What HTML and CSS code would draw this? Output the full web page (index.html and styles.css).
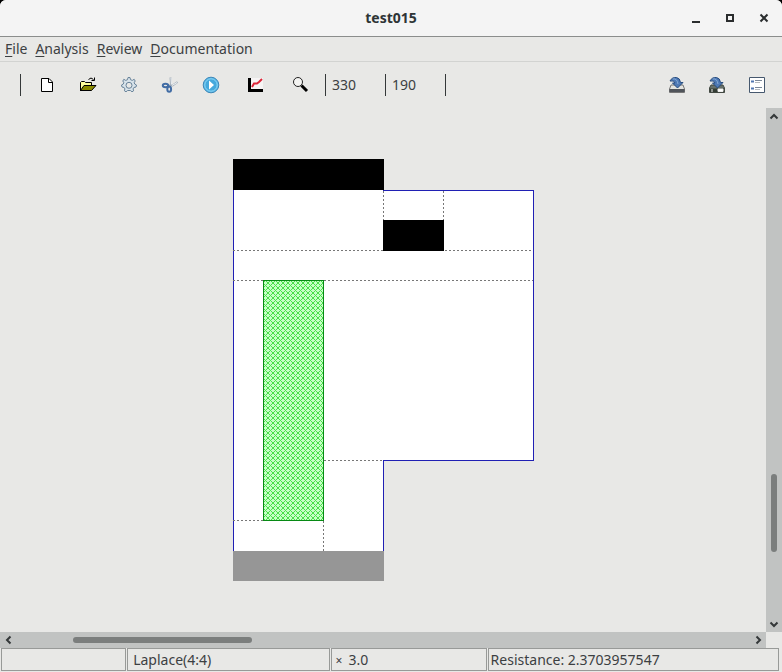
FILE: index.html
```html
<!DOCTYPE html>
<html lang="en">
<head>
<meta charset="utf-8">
<title>test015</title>
<link rel="stylesheet" href="styles.css">
</head>
<body>
<div class="window">
  <header class="titlebar">
    <span></span>
    <h1 class="title">test015</h1>
    <div class="controls">
      <button class="control" aria-label="Minimize"><svg width="10" height="10" viewBox="0 0 10 10"><path d="M1 9H9" stroke="#2a2d2e" stroke-width="2"/></svg></button>
      <button class="control" aria-label="Maximize"><svg width="10" height="10" viewBox="0 0 10 10"><path d="M2 2H8V8H2Z" fill="none" stroke="#2a2d2e" stroke-width="2"/></svg></button>
      <button class="control" aria-label="Close"><svg width="10" height="10" viewBox="0 0 10 10"><path d="M1.5 1.5L8.5 8.5M8.5 1.5L1.5 8.5" stroke="#2a2d2e" stroke-width="2"/></svg></button>
    </div>
  </header>
  <nav class="menubar">
    <button class="menu"><u>F</u>ile</button>
    <button class="menu"><u>A</u>nalysis</button>
    <button class="menu"><u>R</u>eview</button>
    <button class="menu"><u>D</u>ocumentation</button>
  </nav>
  <div class="toolbar">
    <div class="tools tools-start">
      <div class="group">
        <button class="tool" aria-label="New"><svg width="18" height="18" viewBox="0 0 18 18"><path d="M3.5 2.5H11L14.5 6V15.5H3.5Z" fill="#fff" stroke="#000"/><path d="M10.5 2.5V6.5H14.5" fill="none" stroke="#000"/></svg></button>
        <button class="tool" aria-label="Open"><svg width="18" height="18" viewBox="0 0 18 18"><path d="M1.5 15V6.500L2.500 5.500H5.500L6.500 6.500H12.500V9.500" fill="#ffff9c" stroke="#000"/><path d="M1.500 14.500L5 9.500H17L12.500 14.500Z" fill="#8a8a00" stroke="#000"/><path d="M9.500 3.500Q12 .5 14.500 3.500M15.500 1.500V4.500H12.500" fill="none" stroke="#000"/></svg></button>
        <button class="tool" aria-label="Settings"><svg width="18" height="18" viewBox="0 0 18 18"><path d="M8 1.500H10L10.500 3.700L12.300 4.400L14.200 3.300L15.200 5L14.200 6.700L14.700 8L16.500 9L16 11L13.900 11.500L13.100 12.900L13.600 14.800L12 15.800L10.400 14.500H7.600L6 15.800L4.400 14.800L4.900 12.900L4.100 11.500L2 11L1.500 9L3.300 8L3.800 6.700L2.800 5L3.800 3.300L5.700 4.400L7.500 3.700Z" fill="#d8e3ea" stroke="#68839a"/><circle cx="9" cy="9.300" r="3" fill="#e8e8e6" stroke="#68839a"/></svg></button>
        <button class="tool" aria-label="Cut"><svg width="18" height="18" viewBox="0 0 18 18"><path d="M9.500 1.500L10 9L8 11M16.500 6L11.500 9.500L6 9.500" fill="none" stroke="#a7b1bb" stroke-width="2"/><path d="M10 2L10.500 8.500M16 6.500L11 9.500" stroke="#edf1f4"/><ellipse cx="4.500" cy="9.500" rx="2.700" ry="1.800" fill="none" stroke="#426da5" stroke-width="2"/><ellipse cx="8.200" cy="13.200" rx="1.900" ry="2.600" fill="none" stroke="#426da5" stroke-width="2"/></svg></button>
        <button class="tool" aria-label="Run"><svg width="18" height="18" viewBox="0 0 18 18"><circle cx="9" cy="9" r="7.800" fill="#54b5e6" stroke="#3e87b7"/><circle cx="9" cy="9" r="6.200" fill="#45a9dd" stroke="#8cd6f5"/><path d="M7 4.500L12 9L7 13.500Z" fill="#fff"/></svg></button>
      </div>
      <div class="group group-view">
        <button class="tool" aria-label="Plot"><svg width="18" height="18" viewBox="0 0 18 18"><path d="M4 2H16V13H4Z" fill="#f7f5f5"/><path d="M2.500 2V14.500H16" fill="none" stroke="#000" stroke-width="3"/><path d="M5 11L7 7.500H10L12 6L15 3" fill="none" stroke="#dc2638" stroke-width="2"/></svg></button>
        <button class="tool" aria-label="Zoom"><svg width="18" height="18" viewBox="0 0 18 18"><circle cx="7" cy="6" r="4.500" fill="#f4f4f2" stroke="#222"/><path d="M10.500 9.500L16 15" stroke="#000" stroke-width="3"/></svg></button>
      </div>
    </div>
    <output class="readout">330</output>
    <output class="readout readout-last">190</output>
    <div class="tools tools-end">
      <button class="tool" aria-label="Save"><svg width="18" height="18" viewBox="0 0 18 18"><path d="M3 9H15L16.500 13V16.500H1.500V13Z" fill="#e3e3df" stroke="#777"/><path d="M1.500 14.500H16.500" stroke="#50545a" stroke-width="3"/><path d="M2 5Q4 1 8.500 1.500Q12 2 12.500 6.500H15L9.500 12L4.500 7H7Q6.500 4 2 5Z" fill="#4e79b5" stroke="#284d80"/><path d="M5 3Q9 2 10 8" fill="none" stroke="#86aad6"/></svg></button>
      <button class="tool" aria-label="Save as"><svg width="18" height="18" viewBox="0 0 18 18"><path d="M3 9H15L16.500 12V16.500H1.500V12Z" fill="#66706b" stroke="#424942"/><path d="M2 12.500H16V16H2Z" fill="#343d35"/><path d="M4 13V16M10 13H15V15.500H10Z" stroke="#eee" fill="#fff"/><path d="M2 5Q4 1 8.500 1.500Q12 2 12.500 6.500H15L9.500 12L4.500 7H7Q6.500 4 2 5Z" fill="#4e79b5" stroke="#284d80"/><path d="M5 3Q9 2 10 8" fill="none" stroke="#86aad6"/></svg></button>
      <button class="tool" aria-label="Properties"><svg width="18" height="18" viewBox="0 0 18 18"><path d="M1.500 1.500H16.500V16.500H1.500Z" fill="#fff" stroke="#46586e"/><path d="M3 5.500H6M3 12.500H6" stroke="#5277b0" stroke-width="2"/><path d="M7 4.500H14M7 11.500H14" stroke="#7b8797"/><path d="M7 6.500H12M7 13.500H12" stroke="#b5b9bd"/></svg></button>
    </div>
  </div>
  <main class="workspace">
    <div class="canvas">
      <svg class="model" width="302" height="422" viewBox="232 159 302 422" role="img" aria-label="Model geometry" shape-rendering="crispEdges">
        <defs>
          <pattern id="hatch" width="5" height="5" patternUnits="userSpaceOnUse">
            <rect width="5" height="5" fill="#c6ffc6"/>
            <path d="M0 0h1v1H0zM1 1h1v1H1zM2 2h1v1H2zM3 3h1v1H3zM4 4h1v1H4zM4 1h1v1H4zM3 2h1v1H3zM2 3h1v1H2zM1 4h1v1H1z" fill="#48e048"/>
          </pattern>
        </defs>
        <path d="M233 190H534V461H384V551H233Z" fill="#fff"/>
        <path d="M233 190H234V551H233ZM383 190H534V461H384V551H383V460H533V191H383Z" fill="#2020b4"/>
        <rect x="263.500" y="280.500" width="60" height="240" fill="url(#hatch)" stroke="#078a14"/>
        <path d="M233 250.500H533M233 280.500H263M324 280.500H533M324 460.500H383M233 520.500H263M323.500 521V551M383.500 191V220M443.500 191V220" fill="none" stroke="#777" stroke-dasharray="2 2"/>
        <path d="M233 159H384V190H233ZM383 220H444V251H383Z"/>
        <path d="M233 551H384V581H233Z" fill="#969696"/>
      </svg>
    </div>
    <div class="scroll scroll-v">
      <svg class="arrow" width="16" height="16" viewBox="0 0 16 16"><path d="M4.500 10.500L8 7L11.500 10.500"/></svg>
      <div class="track"><span class="before"></span><span class="thumb"></span><span class="after"></span></div>
      <svg class="arrow" width="16" height="16" viewBox="0 0 16 16"><path d="M4.500 6.500L8 10L11.500 6.500"/></svg>
    </div>
    <div class="scroll scroll-h">
      <svg class="arrow" width="16" height="16" viewBox="0 0 16 16"><path d="M10.500 4.500L7 8L10.500 11.500"/></svg>
      <div class="track"><span class="before"></span><span class="thumb"></span><span class="after"></span></div>
      <svg class="arrow" width="16" height="16" viewBox="0 0 16 16"><path d="M6.500 4.500L10 8L6.500 11.500"/></svg>
    </div>
  </main>
  <footer class="statusbar">
    <div class="cell"></div>
    <div class="cell">Laplace(4:4)</div>
    <div class="cell scale"><span class="times">×</span>3.0</div>
    <div class="cell result">Resistance: 2.3703957547</div>
  </footer>
</div>
</body>
</html>
```
FILE: styles.css
```css
* { box-sizing: border-box; }

body {
  margin: 0;
  background: #000;
  color: #3c4042;
  font: 14px/20px "Noto Sans", sans-serif;
}

button {
  margin: 0;
  padding: 0;
  border: 0;
  background: none;
  color: inherit;
  font: inherit;
}

svg { display: block; }

.window {
  display: flex;
  flex-direction: column;
  min-height: 100vh;
  border-radius: 6px 6px 0 0;
  background: #e8e8e6;
  overflow: hidden;
}

.titlebar {
  display: grid;
  grid-template-columns: 1fr auto 1fr;
  align-items: center;
  height: 37px;
  border-bottom: 1px solid #8b8d8c;
  background: #f4f4f4;
}

.title {
  margin: 0;
  color: #2e3436;
  font-size: 14px;
  font-weight: 700;
}

.controls {
  display: flex;
  justify-content: flex-end;
  gap: 24px;
  padding-right: 13px;
}

.menubar {
  display: flex;
  gap: 8px;
  height: 25px;
  padding: 2px 5px;
  border-bottom: 1px solid #d2d3d1;
}

.menu u { text-underline-offset: 2px; }

.toolbar {
  display: flex;
  align-items: center;
  height: 46px;
  padding: 0 16px 0 20px;
}

.tools {
  display: flex;
  align-items: center;
  height: 22px;
}

.tools-start {
  gap: 27px;
  padding: 0 16px 0 17px;
  border-left: 1px solid #343839;
}

.tools-end {
  gap: 22px;
  margin-left: auto;
}

.group {
  display: flex;
  gap: 23px;
}

.group-view { gap: 26px; }

.readout {
  width: 60px;
  height: 22px;
  padding-left: 6px;
  border-left: 1px solid #343839;
  line-height: 22px;
}

.readout-last {
  width: 61px;
  border-right: 1px solid #343839;
}

.workspace {
  display: grid;
  flex: 1;
  grid-template: 1fr 16px / 1fr 16px;
}

.canvas {
  display: flex;
  align-items: center;
  justify-content: center;
}

.scroll {
  display: flex;
  background: #c1c3c2;
}

.scroll-v { flex-direction: column; }

.track {
  display: flex;
  flex: 1;
  align-items: center;
}

.scroll-v .track { flex-direction: column; }

.thumb {
  border-radius: 3px;
  background: #7b7e7d;
}

.scroll-v .before { flex: 350; }
.scroll-v .thumb { flex: 78; width: 6px; }
.scroll-v .after { flex: 64; }

.scroll-h .before { flex: 57; }
.scroll-h .thumb { flex: 179; height: 6px; }
.scroll-h .after { flex: 498; }

.arrow path {
  fill: none;
  stroke: #343839;
  stroke-width: 2;
}

.statusbar {
  display: grid;
  grid-template-columns: 125fr 203fr 155fr 291fr;
  gap: 1px;
  padding: 0 3px 1px 1px;
}

.cell {
  height: 23px;
  padding-left: 5px;
  border: 1px solid #989a98;
  line-height: 21px;
  white-space: nowrap;
}

.scale { padding-left: 3px; }

.result { padding-left: 2px; }

.times {
  display: inline-block;
  width: 13px;
  font-size: 12px;
}
```
